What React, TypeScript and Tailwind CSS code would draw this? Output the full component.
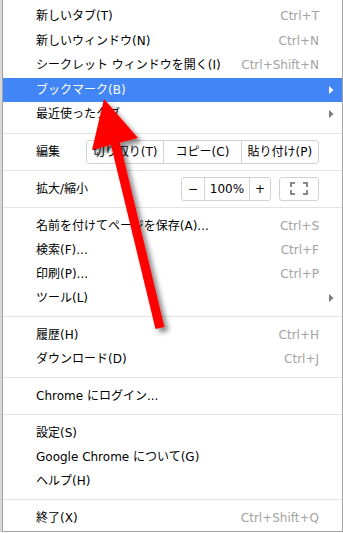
type Item = { label: string; shortcut?: string; sub?: boolean; active?: boolean };

const group1: Item[] = [
  { label: "新しいタブ(T)", shortcut: "Ctrl+T" },
  { label: "新しいウィンドウ(N)", shortcut: "Ctrl+N" },
  { label: "シークレット ウィンドウを開く(I)", shortcut: "Ctrl+Shift+N" },
  { label: "ブックマーク(B)", sub: true, active: true },
  { label: "最近使ったタブ", sub: true },
];

const group3: Item[] = [
  { label: "名前を付けてページを保存(A)...", shortcut: "Ctrl+S" },
  { label: "検索(F)...", shortcut: "Ctrl+F" },
  { label: "印刷(P)...", shortcut: "Ctrl+P" },
  { label: "ツール(L)", sub: true },
];

const group4: Item[] = [
  { label: "履歴(H)", shortcut: "Ctrl+H" },
  { label: "ダウンロード(D)", shortcut: "Ctrl+J" },
];

const group6: Item[] = [
  { label: "設定(S)" },
  { label: "Google Chrome について(G)" },
  { label: "ヘルプ(H)" },
];

const SubArrow = ({ white }: { white?: boolean }) => (
  <svg width="5" height="8" viewBox="0 0 5 8" className="absolute right-[8px] top-1/2 -translate-y-1/2">
    <path d="M0 0 L4.5 4 L0 8 Z" fill={white ? "#ffffff" : "#7a7a7a"} />
  </svg>
);

const Row = ({ item, tall }: { item: Item; tall?: boolean }) => (
  <div
    className={`relative flex items-center justify-between pl-[33px] pr-[23px] ${tall ? "h-[24.5px]" : "h-6"} ${
      item.active ? "bg-[#4285f4] text-white" : "text-black"
    }`}
  >
    <span className="whitespace-nowrap">{item.label}</span>
    {item.shortcut && <span className="text-[#a3a3a3] whitespace-nowrap">{item.shortcut}</span>}
    {item.sub && <SubArrow white={item.active} />}
  </div>
);

const Sep = () => (
  <div className="py-[6px]">
    <div className="h-px bg-[#e3e3e3]" />
  </div>
);

const FullscreenIcon = () => (
  <svg width="18" height="13" viewBox="0 0 18 13" fill="none" stroke="#8a8a8a" strokeWidth="2">
    <path d="M1 5 V1 H5" />
    <path d="M13 1 H17 V5" />
    <path d="M17 8 V12 H13" />
    <path d="M5 12 H1 V8" />
  </svg>
);

// red annotation arrow drawn over the menu
const Arrow = () => (
  <svg className="absolute inset-0 pointer-events-none" width="343" height="533" viewBox="0 0 343 533">
    <defs>
      <filter id="shadow" x="-20%" y="-20%" width="160%" height="160%">
        <feDropShadow dx="4" dy="4" stdDeviation="2.5" floodColor="#000" floodOpacity="0.45" />
      </filter>
    </defs>
    <g filter="url(#shadow)" fill="#ff0000">
      <polygon points="104,99 138,138 92,150" />
      <polygon points="110.5,143 119.5,141 164.5,327 155.5,329" />
    </g>
  </svg>
);

export default function App() {
  return (
    <div
      className="relative w-[343px] h-[533px] bg-white overflow-hidden text-[12px] leading-none"
      style={{ fontFamily: '"DejaVu Sans", "Noto Sans CJK JP", sans-serif' }}
    >
      <div className="border-l-2 border-[#d8d8d8]">
        <div className="border-l border-r border-b border-[#a3a3a3] pt-[4px] pb-px">
          {group1.map((it) => (
            <Row key={it.label} item={it} tall />
          ))}
          <Sep />
          <div className="flex items-center h-6 pl-[33px] pr-[23px]">
            <span className="w-[50px]">編集</span>
            <div className="flex flex-1 h-6 border border-[#d2d2d2] rounded-[3px]">
              <div className="flex-1 flex items-center justify-center">切り取り(T)</div>
              <div className="flex-1 flex items-center justify-center border-l border-[#d2d2d2]">コピー(C)</div>
              <div className="flex-1 flex items-center justify-center border-l border-[#d2d2d2]">貼り付け(P)</div>
            </div>
          </div>
          <Sep />
          <div className="flex items-center h-6 pl-[33px] pr-[23px]">
            <span className="flex-1">拡大/縮小</span>
            <div className="flex h-6 border border-[#d2d2d2] rounded-[3px]">
              <div className="w-[22px] flex items-center justify-center">−</div>
              <div className="w-[45px] flex items-center justify-center border-l border-[#d2d2d2]">100%</div>
              <div className="w-[21px] flex items-center justify-center border-l border-[#d2d2d2]">+</div>
            </div>
            <div className="ml-2 w-10 h-6 flex items-center justify-center border border-[#d2d2d2] rounded-[3px]">
              <FullscreenIcon />
            </div>
          </div>
          <Sep />
          {group3.map((it) => (
            <Row key={it.label} item={it} />
          ))}
          <Sep />
          {group4.map((it) => (
            <Row key={it.label} item={it} />
          ))}
          <Sep />
          <Row item={{ label: "Chrome にログイン..." }} />
          <Sep />
          {group6.map((it) => (
            <Row key={it.label} item={it} />
          ))}
          <Sep />
          <Row item={{ label: "終了(X)", shortcut: "Ctrl+Shift+Q" }} />
        </div>
      </div>
      <Arrow />
    </div>
  );
}
